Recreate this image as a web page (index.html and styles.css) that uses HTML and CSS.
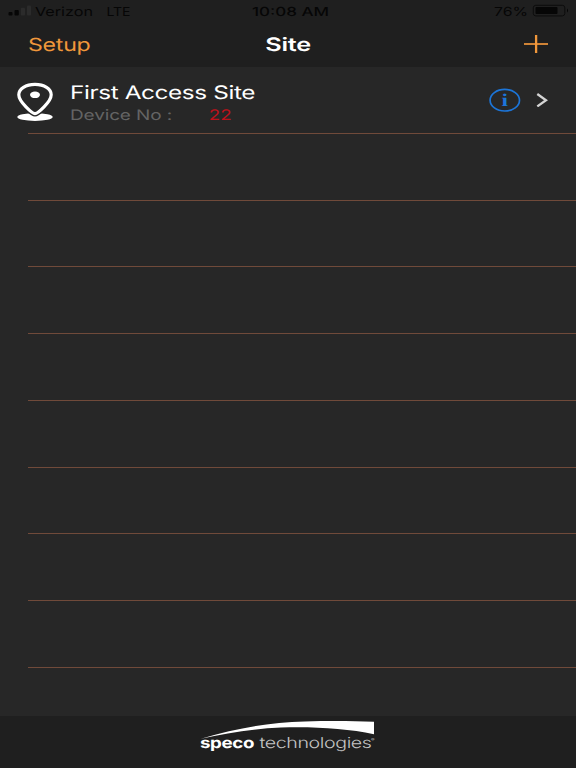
FILE: index.html
```
<!DOCTYPE html>
<html lang="en">
<head>
<meta charset="utf-8">
<meta name="viewport" content="width=device-width, initial-scale=1">
<title>Site</title>
<link rel="stylesheet" href="styles.css">
</head>
<body>
<div class="app">
  <header class="header">
    <div class="status">
      <svg class="carrier" width="135" height="22" viewBox="0 0 135 22">
        <rect x="8.5" y="12" width="4" height="3.5" rx="1"/>
        <rect x="14.5" y="10" width="4.3" height="5.5" rx="1"/>
        <rect class="dim" x="20.8" y="7.8" width="4.2" height="7.7" rx="1"/>
        <rect class="dim" x="27" y="5.5" width="4" height="10" rx="1"/>
        <text x="35" y="15.5" textLength="58" lengthAdjust="spacingAndGlyphs">Verizon</text>
        <text x="106.5" y="15.5" textLength="24" lengthAdjust="spacingAndGlyphs">LTE</text>
      </svg>
      <svg class="clock" width="80" height="22" viewBox="0 0 80 22">
        <text x="1" y="15.7" textLength="77" lengthAdjust="spacingAndGlyphs">10:08 AM</text>
      </svg>
      <svg class="battery" width="84" height="22" viewBox="0 0 84 22">
        <text x="2" y="15.7" textLength="34" lengthAdjust="spacingAndGlyphs">76%</text>
        <rect class="shell" x="41.3" y="5.3" width="31.5" height="10.6" rx="2.5"/>
        <rect x="43.5" y="7" width="22" height="7" rx="1"/>
        <path d="M75 8.5q2.2 2 0 4z"/>
      </svg>
    </div>
    <nav class="nav">
      <svg class="setup" width="66" height="32" viewBox="0 0 66 32">
        <text x="0" y="21.5" textLength="62.5" lengthAdjust="spacingAndGlyphs">Setup</text>
      </svg>
      <svg class="title" width="50" height="32" viewBox="0 0 50 32">
        <text x="1.3" y="22" textLength="45.5" lengthAdjust="spacingAndGlyphs">Site</text>
      </svg>
      <svg class="add" width="26" height="20" viewBox="0 0 26 20">
        <path d="M1 9h24" stroke-width="1.7"/><path d="M13.1 0v18" stroke-width="2.3"/>
      </svg>
    </nav>
  </header>

  <main class="list">
    <div class="row site">
      <svg class="pin" width="38" height="40" viewBox="0 0 38 40">
        <ellipse cx="19" cy="35.1" rx="17.7" ry="3.9"/>
        <path class="gap" d="M19 33.5C16 33.5 10 28 10 28H28S22 33.5 19 33.5Z"/>
        <path class="marker" d="M19 31.6C16.5 31.6 2.8 19.8 2.8 12.7C2.8 6.8 9.8 2.3 19 2.3S35.2 6.8 35.2 12.7C35.2 19.8 21.5 31.6 19 31.6Z"/>
        <ellipse cx="19" cy="12.8" rx="5" ry="3.3"/>
      </svg>
      <div class="info">
        <svg class="name" width="190" height="26" viewBox="0 0 190 26">
          <text x="0" y="19.8" textLength="185" lengthAdjust="spacingAndGlyphs">First Access Site</text>
        </svg>
        <svg class="device" width="190" height="20" viewBox="0 0 190 20">
          <text x="0" y="16.7" textLength="102" lengthAdjust="spacingAndGlyphs">Device No :</text>
          <text class="count" x="138.8" y="16.7" textLength="22.7" lengthAdjust="spacingAndGlyphs">22</text>
        </svg>
      </div>
      <svg class="details" width="32" height="24" viewBox="0 0 32 24">
        <ellipse cx="15.8" cy="12.2" rx="14.7" ry="10.8"/>
        <text x="12.5" y="18.4" textLength="6.5" lengthAdjust="spacingAndGlyphs">i</text>
      </svg>
      <svg class="chevron" width="12" height="14" viewBox="0 0 12 14">
        <path d="M1.3 1L10 7.2L1.3 13.4"/>
      </svg>
    </div>
    <div class="row"></div>
    <div class="row"></div>
    <div class="row"></div>
    <div class="row"></div>
    <div class="row"></div>
    <div class="row"></div>
    <div class="row"></div>
    <div class="row"></div>
  </main>

  <footer class="footer">
    <svg width="178" height="34" viewBox="0 0 178 34">
      <path d="M2 18.8C38 8 70 2.4 106 1.4C132 .6 153 .8 175 1.8V14.3C148 8.5 115 6.6 82 7.6C53 8.8 27 13 2 18.8Z"/>
      <text class="brand" x="1" y="27.6" textLength="54" lengthAdjust="spacingAndGlyphs">speco</text>
      <text class="tech" x="60.5" y="27.6" textLength="112" lengthAdjust="spacingAndGlyphs">technologies</text>
      <text class="mark" x="172" y="21" textLength="3.5" lengthAdjust="spacingAndGlyphs">®</text>
    </svg>
  </footer>
</div>
</body>
</html>
```

FILE: styles.css
```
* { box-sizing: border-box; }

body {
  margin: 0;
  background: #272727;
  font-family: Inter, "Liberation Sans", sans-serif;
}

svg { display: block; flex: none; }
text { text-rendering: geometricPrecision; }

.app {
  display: flex;
  flex-direction: column;
  height: 768px;
  overflow: hidden;
}

.header {
  height: 67px;
  background: #1f1f1f;
}

.status {
  display: grid;
  grid-template-columns: 135px 80px 84px;
  justify-content: space-between;
  height: 22px;
  fill: #060606;
  font-size: 12.5px;
}

.status .dim { fill: #2b2b2b; }
.status .shell { fill: none; stroke: #0c0c0c; stroke-width: 1; }
.clock { margin-left: -22.5px; font-weight: 500; }

.nav {
  display: grid;
  grid-template-columns: 1fr auto 1fr;
  align-items: center;
  height: 45px;
  padding: 0 27px 0 28px;
}

.setup { fill: #f0973b; font-size: 18px; letter-spacing: -0.2px; }
.title { fill: #fff; font-size: 18.5px; font-weight: 600; letter-spacing: -0.2px; }
.add { justify-self: end; fill: none; stroke: #f0973b; }

.list {
  flex: 1;
  background: #272727;
}

.row {
  height: 66.75px;
  margin-left: 28px;
  border-bottom: 1px solid #704a3a;
}

.site {
  display: flex;
  align-items: center;
  padding-right: 27px;
}

.pin {
  margin: 5px 0 0 -12px;
  fill: #fff;
}

.pin .gap { fill: #272727; stroke: #272727; stroke-width: 1.8; }
.marker { fill: #272727; stroke: #fff; stroke-width: 3.2; }

.info { flex: 1; margin: 3px 0 0 16px; }
.name { fill: #fff; font-size: 18.5px; letter-spacing: -0.3px; }
.device { fill: #646464; font-size: 14.5px; margin-top: -2px; letter-spacing: -0.1px; }
.count { fill: #bd121b; }

.details { margin-right: 15px; }
.details ellipse { fill: none; stroke: #1c75d8; stroke-width: 1.7; }
.details text {
  fill: #1c75d8;
  font: bold 18px "Liberation Serif", serif;
}

.chevron {
  margin-right: 1px;
  fill: none;
  stroke: #d4d4d4;
  stroke-width: 2.3;
}

.footer {
  display: flex;
  justify-content: center;
  height: 52px;
  background: #1f1f1f;
  fill: #fff;
}

.footer svg { margin-top: 4px; }
.brand { font-size: 15px; font-weight: 700; letter-spacing: -0.3px; }
.tech { font-size: 15px; font-weight: 300; letter-spacing: -0.3px; fill: #c4c4c4; }
.mark { font-size: 4px; fill: #c4c4c4; }
```
